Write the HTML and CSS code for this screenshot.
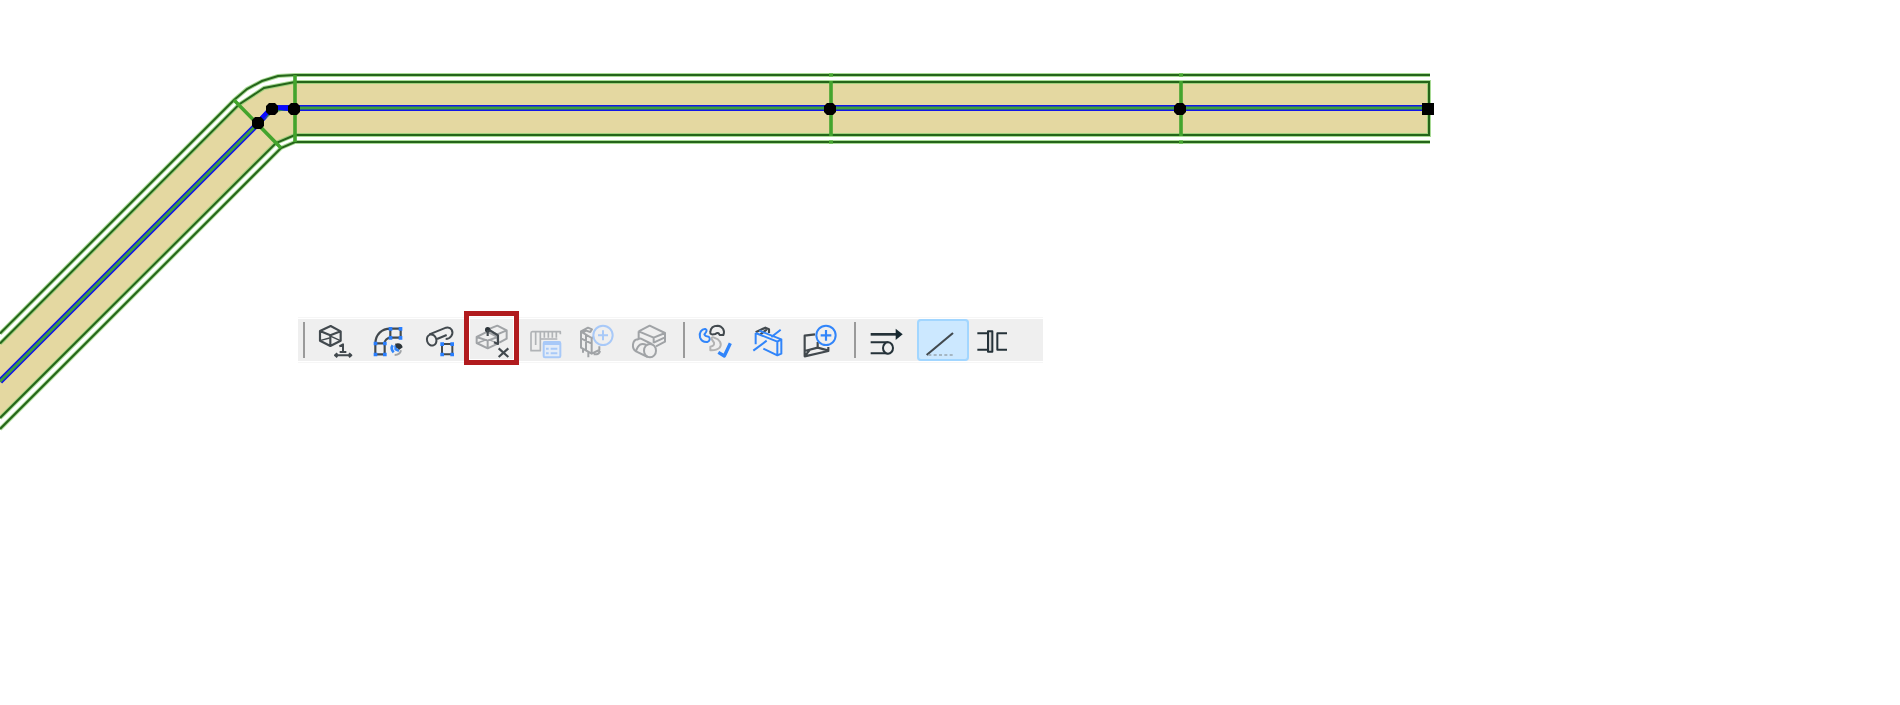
FILE: index.html
```html
<!DOCTYPE html>
<html lang="en">
<head>
<meta charset="utf-8">
<title>MEP route</title>
<link rel="stylesheet" href="styles.css">
</head>
<body>
<main class="workspace">
  <svg class="drawing" viewBox="0 0 1900 705" aria-hidden="true">
    <path class="duct" d="M0 343.5L239 104.5L264 88L295 82H1429V135H295L276 143L0 418Z"/>
    <path class="halo" d="M0 333.5L234 100L247 89L262 81L278 76L295 75H1430M0 343.5L239 104.5L264 88L295 82H1429V135H295L276 143L0 418M0 429L281 148L295 142H1430"/>
    <path class="edge" d="M0 333.5L234 100L247 89L262 81L278 76L295 75H1430M0 343.5L239 104.5L264 88L295 82H1429V135H295L276 143L0 418M0 429L281 148L295 142H1430"/>
    <path class="axis-outer" d="M0 381.5L258 123.5L272 108H1425"/>
    <path class="axis-inner" d="M0 381.5L258 123.5Q270 108 295 108H1425"/>
    <path class="bend-axis" d="M258 122L272 108H295"/>
    <path class="joint" d="M234 100L281 148M295 75V142M831 81V136M1181 81V136"/>
    <path class="tick" d="M831 73.5V76.5M831 140.5V143.5M1181 73.5V76.5M1181 140.5V143.5"/>
    <path class="node" d="M255 117h6l3 3v6l-3 3h-6l-3-3v-6zM269 103h6l3 3v6l-3 3h-6l-3-3v-6zM291 103h6l3 3v6l-3 3h-6l-3-3v-6zM827 103h6l3 3v6l-3 3h-6l-3-3v-6zM1177 103h6l3 3v6l-3 3h-6l-3-3v-6zM1422 103h12v12h-12z"/>
  </svg>

  <nav class="toolbar" aria-label="Edit route">
    <span class="divider first"></span>
    <button class="tool" aria-label="Resize">
      <svg viewBox="60 42 156 126"><g class="dark">
        <path class="strong" d="M90 78L122 63L152 79V107L121 123L90 107ZM90 78L121 91L152 79M121 91V122"/><path class="fine" d="M92 106L119 99M123 94L151 107"/>
        <path d="M148 124L159 118V141M149 141H169M135 151H184M142 145L135 151L142 157M177 145L184 151L177 157"/>
      </g></svg>
    </button>
    <button class="tool" aria-label="Edit bend">
      <svg viewBox="216 42 156 126">
        <path class="dark strong" d="M256 115C257 88 275 71 301 71H332V98H301C291 99 284 106 284 115V148H256V115H284M301 71V98"/>
        <path class="blue-fill" d="M296 66h11v11h-11zM326 66h11v11h-11zM296 93h11v11h-11zM326 93h11v11h-11zM251 110h11v11h-11zM279 110h11v11h-11zM251 143h11v11h-11zM279 143h11v11h-11z"/>
        <path class="blue heavy" d="M308 121Q301 132 311 142M317 121V133L327 137"/>
        <path class="dark-fill" d="M315 116Q334 110 338 127L328 134L318 127Z"/>
        <path class="grey thick" d="M333 136Q330 150 314 150"/>
      </svg>
    </button>
    <button class="tool" aria-label="Fit to element">
      <svg viewBox="372 42 156 126">
        <g class="dark"><ellipse cx="425" cy="105" rx="14" ry="17" transform="rotate(-18 425 105)"/><path d="M418 88L468 68C484 64 492 81 484 93Q478 102 467 102M441 102L470 90"/><path d="M456 117H487V148H456Z"/></g>
        <path class="blue-fill" d="M451 112h11v11h-11zM481 112h11v11h-11zM451 143h11v11h-11zM481 143h11v11h-11z"/>
      </svg>
    </button>
    <button class="tool marked" aria-label="Remove connection">
      <svg viewBox="18 42 156 126">
        <path class="grey" d="M50 96L82 80L113 96V116L83 130L50 114ZM50 96L83 107L113 96M83 107V130M84 73L112 62L140 76V101L118 113M98 82L112 88L140 76"/><path class="grey fine" d="M52 114L80 104M86 104L112 114"/>
        <circle cx="83" cy="74" r="8" class="dark-fill"/><path class="dark strong" d="M83 75V93M88 75L114 91V117L102 112"/>
        <path class="dark strong" d="M116 130L145 156M145 130L116 156"/>
      </svg>
    </button>
    <button class="tool" aria-label="Flexible segment settings">
      <svg viewBox="174 42 156 126">
        <path class="pale" d="M301 88V80H217Q213 80 213 85V137H241V102H292M227 82V120M241 82V102M253 82V98M265 82V98M277 82V98M289 82V98"/>
        <rect class="light-box" x="251" y="111" width="50" height="46" rx="4"/><path class="light-fill" d="M251 109H301V120H251Z"/><path class="light thick" d="M258 131H266M272 131H292M258 145H266M272 145H292"/>
      </svg>
    </button>
    <button class="tool" aria-label="Add equipment">
      <svg viewBox="30 42 156 126">
        <path class="grey" d="M63 79L84 68L96 73L91 81L78 77L68 83L95 99V146L63 128ZM78 90V136M63 100L95 116M69 132V143M85 142V157M95 99L106 94M95 146L118 135V124M101 148Q118 149 120 138"/>
        <g class="light"><circle class="disc" cx="129" cy="91" r="29"/><path d="M129 76V106M114 91H144"/></g>
      </svg>
    </button>
    <button class="tool" aria-label="Connect elements">
      <svg viewBox="186 42 156 126">
        <path class="grey" d="M236 79L269 62L315 84V110L288 124M236 79L281 98L315 84M281 98V115M236 79V101M281 113L315 97"/>
        <path class="grey" d="M234 103C216 104 214 130 228 139L263 156M232 104Q238 100 243 101L275 117M228 139Q237 108 259 120"/><ellipse class="grey" cx="270" cy="137" rx="18" ry="20"/>
      </svg>
    </button>
    <span class="divider second"></span>
    <button class="tool" aria-label="Apply system">
      <svg viewBox="57 42 156 126">
        <path class="blue" d="M106 72C95 71 86 84 90 97Q95 112 112 111C119 109 122 101 116 95Q105 95 103 88Q115 75 106 72Z"/>
        <path class="dark" d="M121 81C122 69 131 62 143 62C157 63 166 77 160 90H149Q145 79 136 87Q119 91 121 81Z"/>
        <path class="silver" d="M124 101Q125 95 133 98C149 102 157 116 149 128Q140 137 121 136L121 125Q134 123 132 113Z"/>
        <path class="blue check" d="M145 142L163 153L181 115"/>
      </svg>
    </button>
    <button class="tool" aria-label="Split segment">
      <svg viewBox="213 42 156 126">
        <path class="dark strong" d="M257 82L286 68L297 73V84M271 88L290 74"/><path class="blue" d="M257 84V118M257 84L322 110V151L280 131M268 77L334 103V146L322 151M322 110L334 103M304 96L332 74M250 137L290 107"/>
      </svg>
    </button>
    <button class="tool" aria-label="Add opening">
      <svg viewBox="369 42 156 126">
        <path class="dark strong" d="M435 88L404 92V154L475 138V126M404 138L443 128L473 136M443 128V111M404 154L420 134"/>
        <g class="blue"><circle class="disc" cx="468" cy="91" r="29"/><path class="strong" d="M468 75V107M452 91H484"/></g>
      </svg>
    </button>
    <span class="divider third"></span>
    <button class="tool" aria-label="Flow direction">
      <svg viewBox="48 42 156 126">
        <path class="ink heavy" d="M77 88H155"/><path class="ink-fill" d="M152 71L173 88L152 105Z"/><path class="ink" d="M77 112H130M77 145H130"/><ellipse class="ink disc" cx="129" cy="129" rx="15" ry="17"/>
      </svg>
    </button>
    <button class="tool selected" aria-label="Single line" aria-pressed="true">
      <svg viewBox="216 42 156 126"><path class="dark slant" d="M245 150L324 84"/><path class="dash" d="M250 150H324"/></svg>
    </button>
    <button class="tool last" aria-label="Coupling">
      <svg viewBox="372 42 156 126"><path class="ink" d="M397 85H428M397 134H428M486 85H457V134H486"/><rect class="ink sleeve" x="429" y="79" width="13" height="61"/></svg>
    </button>
  </nav>
</main>
</body>
</html>
```

FILE: styles.css
```css
* { box-sizing: border-box; }
body { margin: 0; background: #fff; font-family: "Open Sans", sans-serif; }
.workspace { position: relative; width: 1900px; height: 705px; padding: 317px 0 0 298px; overflow: hidden; }
.drawing { position: absolute; inset: 0; width: 1900px; height: 705px; fill: none; }
.duct { fill: #e4d8a1; }
.halo { stroke: #8bce72; stroke-width: 4; stroke-opacity: .75; }
.edge { stroke: #25651a; stroke-width: 2; }
.axis-outer { stroke: #1016e8; stroke-width: 6; }
.axis-inner { stroke: #3f9f3c; stroke-width: 2.8; }
.bend-axis { stroke: #0a0aff; stroke-width: 4.5; }
.joint { stroke: #43a42d; stroke-width: 3.6; }
.tick { stroke: #43a42d; stroke-width: 4; }
.node { fill: #000; }

.toolbar { position: relative; display: flex; width: 745px; height: 46px; padding: 1px 0; background: #efefef; border: 1px solid #f6f6f6; border-width: 1px 0; background-clip: content-box; }
.divider { flex: none; align-self: center; width: 2px; height: 36px; background: #9a9a9a; }
.first { margin: 0 1px 0 5px; }
.first + .tool { margin-left: 4px; }
.second { margin: 0 4px 0 9px; }
.third { margin: 0 5px 0 9px; }
.tool { flex: none; width: 52px; height: 42px; padding: 0; border: 0; background: transparent; }
.tool svg { display: block; width: 52px; height: 42px; fill: none; stroke-width: 6; stroke-linejoin: round; }
.marked { position: relative; }
.marked::after { content: ""; box-sizing: border-box; position: absolute; left: -2px; top: -8px; width: 55px; height: 54px; border: 5px solid #b11b1e; box-shadow: inset 0 0 0 1px #fff; }
.selected { margin-left: 4px; background: #cce8ff; border-radius: 4px; box-shadow: inset 0 0 0 2px #a2d6ff; }

.dark { stroke: #42494e; }
.ink { stroke: #253239; }
.grey { stroke: #a0a3a6; }
.silver { stroke: #b3b3b3; }
.pale { stroke: #b0b3b6; stroke-width: 5; }
.blue { stroke: #3185fa; }
.light { stroke: #a8c9f8; }
.fine { stroke-width: 4; }
.strong { stroke-width: 6.5; }
.thick { stroke-width: 6; }
.heavy { stroke-width: 8; }
.check { stroke-width: 10; }
.slant { stroke-width: 6.5; }
.blue-fill { fill: #287eff; }
.dark-fill { fill: #2c3439; }
.ink-fill { fill: #15272f; }
.light-fill { fill: #a8c9f8; }
.light-box { fill: #e3ecf8; stroke: #a8c9f8; }
.disc { fill: #efefef; }
.sleeve { fill: #d4d4d4; }
.dash { stroke: #98a5ae; stroke-width: 4; stroke-dasharray: 9 7; }
```
